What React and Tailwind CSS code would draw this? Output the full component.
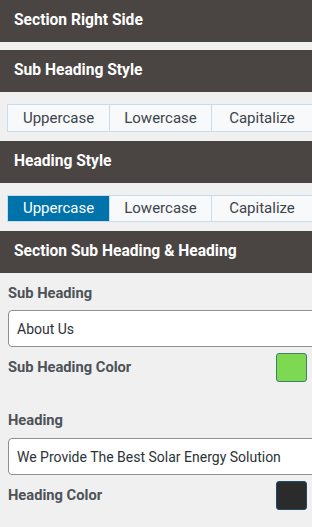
import React, { useState } from 'react';

const Header = ({ children, className = '' }) => (
    <div className={`h-[42px] bg-[#4a4543] px-[14px] flex items-center text-white font-bold text-[15.6px] ${className}`}>
        {children}
    </div>
);

const CaseToggle = ({ value, onChange, className = '' }) => {
    const options = ['Uppercase', 'Lowercase', 'Capitalize'];
    return (
        <div className={`ml-[7px] flex ${className}`}>
            {options.map((opt, i) => (
                <button
                    key={opt}
                    onClick={() => onChange(opt)}
                    className={`${i === 2 ? 'w-[104px] pr-[2px]' : 'w-[103px]'} shrink-0 h-full flex items-center justify-center text-[15px] border border-[#c8dcee] ${i > 0 ? '-ml-px' : ''} ${value === opt
                        ? 'bg-[#0073aa] text-white border-[#0073aa]'
                        : 'bg-[#f7f9fb] text-[#3c434a]'
                        }`}
                >
                    {opt}
                </button>
            ))}
        </div>
    );
};

const App = () => {
    const [subStyle, setSubStyle] = useState(null);
    const [headStyle, setHeadStyle] = useState('Uppercase');
    const [subHeading, setSubHeading] = useState('About Us');
    const [heading, setHeading] = useState('We Provide The Best Solar Energy Solution');

    return (
        <div className="w-[312px] h-[527px] overflow-hidden bg-[#f0f0f0]" style={{ fontFamily: 'Roboto, "Liberation Sans", sans-serif' }}>
            <Header>Section Right Side</Header>
            <Header className="mt-2">Sub Heading Style</Header>
            <CaseToggle value={subStyle} onChange={setSubStyle} className="mt-3 h-[28px]" />
            <Header className="mt-[9px]">Heading Style</Header>
            <CaseToggle value={headStyle} onChange={setHeadStyle} className="mt-3 h-[27px]" />
            <Header className="mt-[9px] h-[41px]">Section Sub Heading &amp; Heading</Header>

            <div className="pl-2 pr-[5px]">
                {/* Sub heading */}
                <div className="mt-[10px] text-[14.7px] leading-5 font-bold text-[#4d5257]">Sub Heading</div>
                <input
                    type="text"
                    value={subHeading}
                    onChange={(e) => setSubHeading(e.target.value)}
                    className="mt-[7px] block w-[320px] h-[37px] px-[8px] bg-white border border-[#8c8f94] rounded-[4px] text-[14px] text-[#2c3338] focus:outline-none"
                />
                <div className="mt-[6px] h-[29px] flex items-center justify-between">
                    <span className="text-[14.7px] font-bold text-[#4d5257]">Sub Heading Color</span>
                    <div className="w-[31px] h-[29px] rounded-[3px] bg-[#7cd951] border border-[#3d7f6c]" />
                </div>

                {/* Heading */}
                <div className="mt-[28px] text-[14.7px] leading-5 font-bold text-[#4d5257]">Heading</div>
                <input
                    type="text"
                    value={heading}
                    onChange={(e) => setHeading(e.target.value)}
                    className="mt-[8px] block w-[320px] h-[37px] px-[8px] bg-white border border-[#8c8f94] rounded-[4px] text-[14px] text-[#2c3338] focus:outline-none"
                />
                <div className="mt-[6px] h-[29px] flex items-center justify-between">
                    <span className="text-[14.7px] font-bold text-[#4d5257]">Heading Color</span>
                    <div className="w-[31px] h-[29px] rounded-[3px] bg-[#2b2b2b] border border-[#1d4a6b]" />
                </div>
            </div>
        </div>
    );
};

export default App;
